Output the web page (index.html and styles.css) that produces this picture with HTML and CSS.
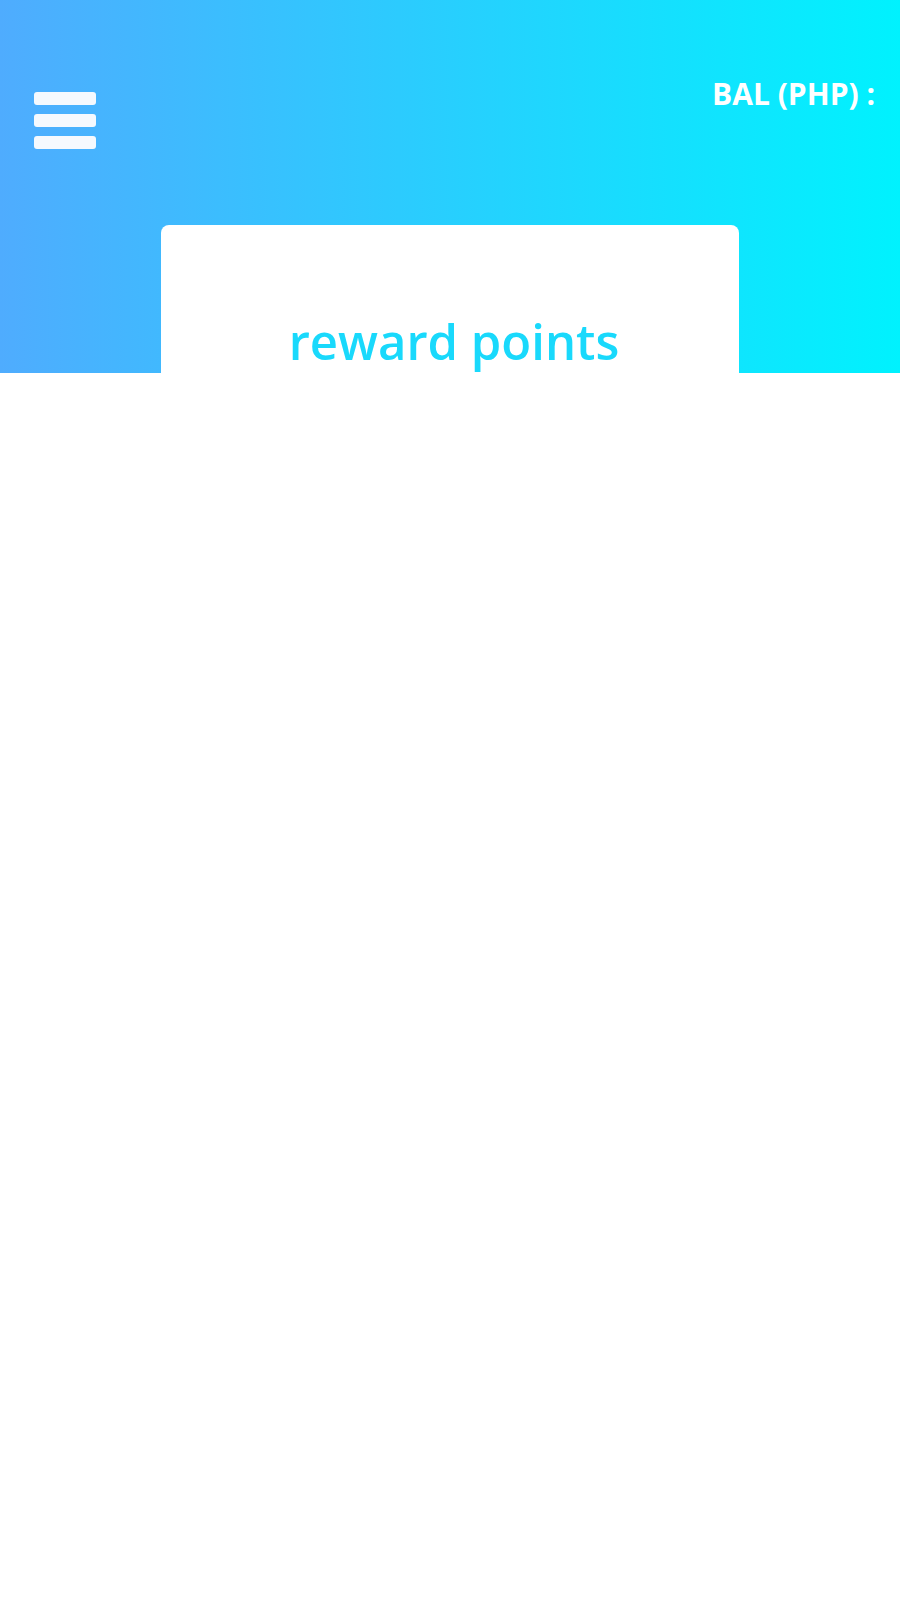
FILE: index.html
```html
<!DOCTYPE html>
<html lang="en">
<head>
<meta charset="utf-8">
<title>Reward points</title>
<link rel="stylesheet" href="styles.css">
</head>
<body>
<div class="page">
  <header class="topbar">
    <button class="menu" aria-label="Menu">
      <span class="bar"></span>
      <span class="bar"></span>
      <span class="bar"></span>
    </button>
    <div class="balance">BAL (PHP) :</div>
  </header>
  <main class="card">
    <h1 class="title">reward points</h1>
  </main>
</div>
</body>
</html>
```
FILE: styles.css
```css
html, body {
  margin: 0;
  padding: 0;
  background: #ffffff;
}
body {
  font-family: "Open Sans", "Noto Sans", sans-serif;
}
.page {
  min-height: 1600px;
  background: linear-gradient(to right, #4facfe 0%, #00f2fe 100%) top left / 100% 373px no-repeat, #ffffff;
}
.topbar {
  display: flex;
  justify-content: space-between;
  align-items: flex-start;
  height: 150px;
  padding: 74px 25px 0 34px;
  box-sizing: border-box;
}
.menu {
  display: flex;
  flex-direction: column;
  gap: 9px;
  margin: 18px 0 0 0;
  padding: 0;
  border: 0;
  background: transparent;
}
.bar {
  display: block;
  width: 62px;
  height: 13px;
  border-radius: 3px;
  background: #f5f9fe;
}
.balance {
  color: #ffffff;
  font-weight: 700;
  font-size: 30px;
  line-height: 1.362;
}
.card {
  width: 578px;
  margin: 75px auto 0;
  min-height: 400px;
  background: #ffffff;
  border-radius: 8px;
  padding-top: 83px;
  box-sizing: border-box;
}
.title {
  margin: 0;
  padding-left: 8px;
  text-align: center;
  font-size: 49px;
  font-weight: 600;
  line-height: 1.362;
  color: #19d9fc;
}
```
